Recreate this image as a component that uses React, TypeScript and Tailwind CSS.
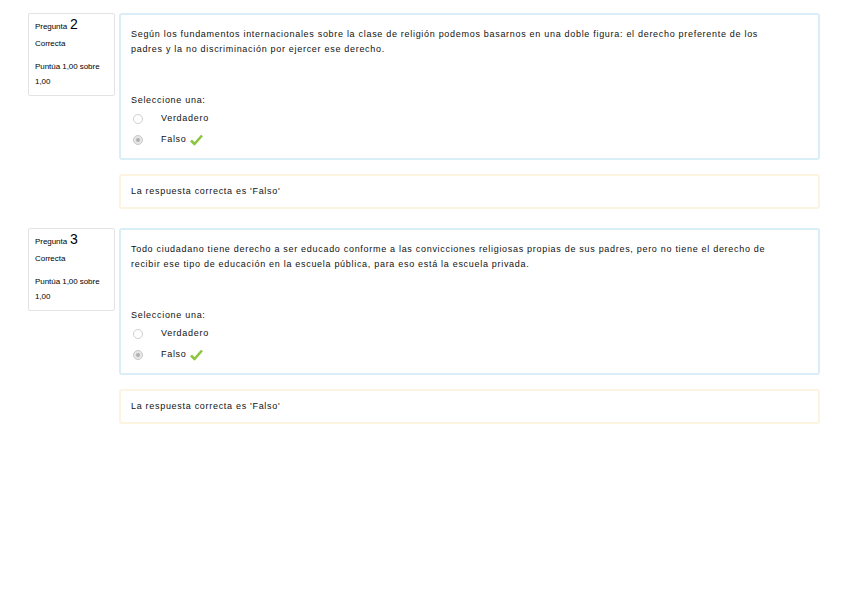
const font = { fontFamily: '"Liberation Sans", Arial, sans-serif' };

type Q = { num: number; text: string };

const questions: Q[] = [
  {
    num: 2,
    text: 'Según los fundamentos internacionales sobre la clase de religión podemos basarnos en una doble figura: el derecho preferente de los padres y la no discriminación por ejercer ese derecho.',
  },
  {
    num: 3,
    text: 'Todo ciudadano tiene derecho a ser educado conforme a las convicciones religiosas propias de sus padres, pero no tiene el derecho de recibir ese tipo de educación en la escuela pública, para eso está la escuela privada.',
  },
];

function Check() {
  return (
    <svg width="13" height="12" viewBox="0 0 13 12" className="ml-[3px]">
      <path d="M1 6.5 L4.5 10 L12 1.5" fill="none" stroke="#8cc63f" strokeWidth="2.6" strokeLinejoin="round" />
    </svg>
  );
}

function Radio({ checked }: { checked?: boolean }) {
  return (
    <span
      className={
        'inline-flex w-[10px] h-[10px] rounded-full border items-center justify-center ' +
        (checked ? 'border-[#c9c9c9] bg-[#e6e6e6]' : 'border-[#cfcfcf] bg-white')
      }
    >
      {checked && <span className="w-[4px] h-[4px] rounded-full bg-[#b0b0b0]" />}
    </span>
  );
}

function Question({ q }: { q: Q }) {
  return (
    <div className="flex gap-[4px]">
      <div className="w-[87px] h-[83px] shrink-0 border border-[#e3e3e3] rounded-[2px] bg-white px-[6px] text-[8px] tracking-[-0.05px] text-black">
        <div className="flex items-baseline gap-[3px] h-[17px]">
          <span>Pregunta</span>
          <span className="text-[14px] tracking-normal">{q.num}</span>
        </div>
        <div className="mt-[7px]">Correcta</div>
        <div className="mt-[9px] leading-[15px]">
          Puntúa 1,00 sobre
          <br />
          1,00
        </div>
      </div>
      <div className="flex-1 flex flex-col gap-[14px]">
        <div className="h-[147px] border-2 border-[#d9eef6] rounded-[3px] bg-white px-[10px] pt-[12px] text-[9px] tracking-[0.7px] text-[#111]">
          <p className="max-w-[650px] leading-[15px]">{q.text}</p>
          <div className="mt-[36px] leading-[15px]">Seleccione una:</div>
          <div className="flex items-center h-[18px] mt-[2px]">
            <span className="w-[30px] pl-[2px] flex"><Radio /></span>
            <span>Verdadero</span>
          </div>
          <div className="flex items-center h-[18px] mt-[3px]">
            <span className="w-[30px] pl-[2px] flex"><Radio checked /></span>
            <span>Falso</span>
            <Check />
          </div>
        </div>
        <div className="h-[35px] border-2 border-[#fcf3e0] rounded-[3px] bg-white px-[10px] flex items-center text-[9px] tracking-[0.7px] text-[#111]">
          La respuesta correcta es 'Falso'
        </div>
      </div>
    </div>
  );
}

export default function App() {
  return (
    <div className="w-[848px] h-[599px] bg-white overflow-hidden" style={font}>
      <div className="pl-[28px] pr-[28px] pt-[13px] flex flex-col gap-[19px]">
        {questions.map((q) => (
          <Question key={q.num} q={q} />
        ))}
      </div>
    </div>
  );
}
